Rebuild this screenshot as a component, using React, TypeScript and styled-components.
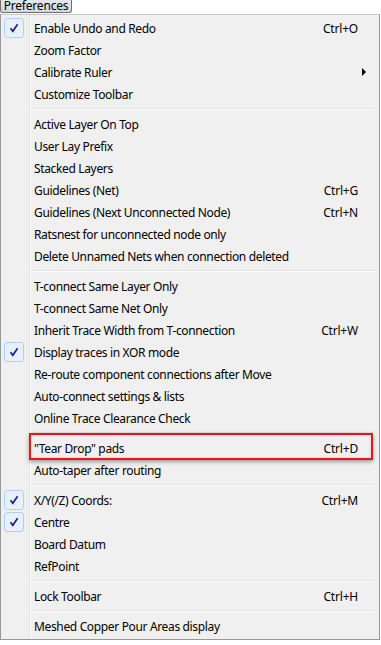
import React from 'react'
import styled, { createGlobalStyle } from 'styled-components'

const GlobalStyle = createGlobalStyle`
  html, body {
    margin: 0;
    padding: 0;
    background: #ffffff;
  }
  body {
    font-family: 'Noto Sans', 'Open Sans', 'DejaVu Sans', sans-serif;
    font-size: 12px;
    color: #000;
  }
`

const Page = styled.div`
  width: 381px;
  height: 645px;
  background: #fff;
  overflow: hidden;
`

const MenuBar = styled.div`
  display: flex;
  height: 14px;
  align-items: flex-start;
`

const MenuTitle = styled.div`
  height: 13px;
  width: 72px;
  box-sizing: border-box;
  border: 1px solid #707070;
  border-top: none;
  border-radius: 0 0 3px 3px;
  background: linear-gradient(#e4e8ee, #d2d7df);
  display: flex;
  align-items: center;
  justify-content: center;
  font-size: 12px;
  line-height: 12px;
  letter-spacing: -0.2px;
  white-space: nowrap;
`

const Menu = styled.div`
  width: 380px;
  box-sizing: border-box;
  border: 1px solid #979797;
  border-top-color: #c8c8c8;
  background: #f0f0f0;
  padding: 2px;
  position: relative;
  &::before {
    content: '';
    position: absolute;
    top: 0;
    bottom: 0;
    left: 28px;
    width: 1px;
    background: #e2e3e3;
  }
  &::after {
    content: '';
    position: absolute;
    top: 0;
    bottom: 0;
    left: 29px;
    width: 1px;
    background: #ffffff;
  }
`

const Row = styled.div<{ $marked?: boolean }>`
  height: 22px;
  display: flex;
  align-items: center;
  position: relative;
  z-index: 1;
  ${(p) =>
    p.$marked
      ? `
    &::before {
      content: '';
      position: absolute;
      left: 26px;
      right: 4px;
      top: -4px;
      bottom: -1px;
      border: 2px solid #e4181c;
      box-shadow: 0 2px 4px rgba(0, 0, 0, 0.35), inset 0 0 3px rgba(0, 0, 0, 0.15);
      pointer-events: none;
    }
  `
      : ''}
`

const Gutter = styled.div`
  width: 30px;
  height: 22px;
  flex: none;
  display: flex;
  align-items: center;
`

const CheckBox = styled.div`
  width: 20px;
  height: 20px;
  box-sizing: border-box;
  margin-left: 1px;
  border: 1px solid #aecff7;
  border-radius: 3px;
  background: #e8f1fb;
  display: flex;
  align-items: center;
  justify-content: center;
`

const Label = styled.div`
  flex: 1;
  padding-left: 1px;
  white-space: nowrap;
  letter-spacing: -0.35px;
`

const Shortcut = styled.div`
  padding-right: 19px;
  white-space: nowrap;
  letter-spacing: -0.2px;
`

const Arrow = styled.div`
  width: 0;
  height: 0;
  border-top: 4px solid transparent;
  border-bottom: 4px solid transparent;
  border-left: 4px solid #000;
  margin-right: 11px;
`

const Separator = styled.div`
  height: 8px;
  display: flex;
  align-items: center;
  padding-left: 28px;
  padding-right: 2px;
  &::after {
    content: '';
    flex: 1;
    height: 1px;
    background: #e0e0e0;
    border-bottom: 1px solid #ffffff;
  }
`

type Item = {
  label: string
  shortcut?: string
  checked?: boolean
  submenu?: boolean
  marked?: boolean
}

const groups: Item[][] = [
  [
    { label: 'Enable Undo and Redo', shortcut: 'Ctrl+O', checked: true },
    { label: 'Zoom Factor' },
    { label: 'Calibrate Ruler', submenu: true },
    { label: 'Customize Toolbar' },
  ],
  [
    { label: 'Active Layer On Top' },
    { label: 'User Lay Prefix' },
    { label: 'Stacked Layers' },
    { label: 'Guidelines (Net)', shortcut: 'Ctrl+G' },
    { label: 'Guidelines (Next Unconnected Node)', shortcut: 'Ctrl+N' },
    { label: 'Ratsnest for unconnected node only' },
    { label: 'Delete Unnamed Nets when connection deleted' },
  ],
  [
    { label: 'T-connect Same Layer Only' },
    { label: 'T-connect Same Net Only' },
    { label: 'Inherit Trace Width from T-connection', shortcut: 'Ctrl+W' },
    { label: 'Display traces in XOR mode', checked: true },
    { label: 'Re-route component connections after Move' },
    { label: 'Auto-connect settings & lists' },
    { label: 'Online Trace Clearance Check' },
  ],
  [
    { label: '"Tear Drop" pads', shortcut: 'Ctrl+D', marked: true },
    { label: 'Auto-taper after routing' },
  ],
  [
    { label: 'X/Y(/Z) Coords:', shortcut: 'Ctrl+M', checked: true },
    { label: 'Centre', checked: true },
    { label: 'Board Datum' },
    { label: 'RefPoint' },
  ],
  [{ label: 'Lock Toolbar', shortcut: 'Ctrl+H' }],
  [{ label: 'Meshed Copper Pour Areas display' }],
]

function Check() {
  return (
    <svg width="10" height="10" viewBox="0 0 10 10">
      <path d="M1.5 5.2 L3.8 8.3 L8.6 1.2" fill="none" stroke="#1a1f8c" strokeWidth="1.7" />
    </svg>
  )
}

function MenuRow({ item }: { item: Item }) {
  return (
    <Row $marked={item.marked}>
      <Gutter>
        {item.checked && (
          <CheckBox>
            <Check />
          </CheckBox>
        )}
      </Gutter>
      <Label>{item.label}</Label>
      {item.shortcut && <Shortcut>{item.shortcut}</Shortcut>}
      {item.submenu && <Arrow />}
    </Row>
  )
}

export default function App() {
  return (
    <Page>
      <GlobalStyle />
      <MenuBar>
        <MenuTitle>Preferences</MenuTitle>
      </MenuBar>
      <Menu>
        {groups.map((group, gi) => (
          <React.Fragment key={gi}>
            {gi > 0 && <Separator />}
            {group.map((item) => (
              <MenuRow key={item.label} item={item} />
            ))}
          </React.Fragment>
        ))}
      </Menu>
    </Page>
  )
}
